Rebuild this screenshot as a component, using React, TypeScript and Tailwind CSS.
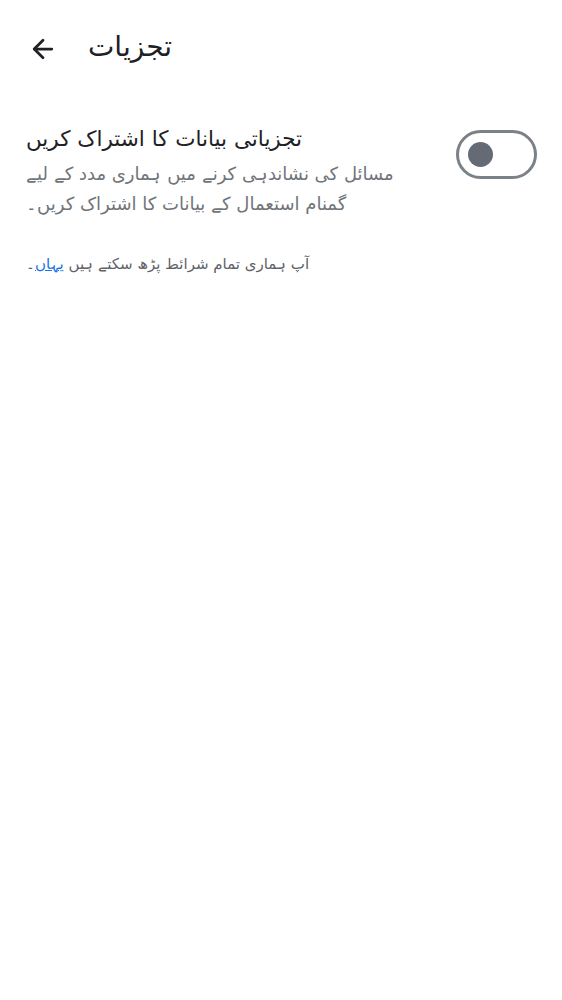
import { ArrowLeft } from "lucide-react";

const font = { fontFamily: '"DejaVu Sans", "Noto Sans", sans-serif' };

export default function App() {
  return (
    <div className="min-h-screen w-full bg-white" style={font}>
      {/* Top bar */}
      <header className="flex h-[98px] items-center px-[28px] pb-[4px]">
        <ArrowLeft className="mt-[4px] size-[30px] text-[#202124]" strokeWidth={2.2} />
        <h1 dir="rtl" className="ml-[30px] text-[28px] text-[#202124]">
          تجزیات
        </h1>
      </header>

      {/* Setting row */}
      <section className="flex items-start justify-between pl-[26px] pr-[25px] pt-[26px]">
        <div className="max-w-[390px]">
          <h2 dir="rtl" className="text-left text-[21.5px] leading-[30px] text-[#202124]">
            تجزیاتی بیانات کا اشتراک کریں
          </h2>
          <p dir="rtl" className="mt-[5px] text-left text-[18px] leading-[30px] text-[#70757a]">
            مسائل کی نشاندہی کرنے میں ہماری مدد کے لیے گمنام استعمال کے بیانات کا اشتراک کریں۔
          </p>
        </div>
        <button
          role="switch"
          aria-checked="false"
          className="mt-[6px] flex h-[49px] w-[81px] shrink-0 items-center rounded-full border-[3px] border-[#7b8189] bg-white pl-[9px]"
        >
          <span className="size-[25px] rounded-full bg-[#646b74]" />
        </button>
      </section>

      <p dir="rtl" className="mt-[30px] pl-[26px] text-left text-[15px] leading-[30px] text-[#5f6368]">
        آپ ہماری تمام شرائط پڑھ سکتے ہیں{" "}
        <a href="#" className="text-[#1a73e8] underline">
          یہاں
        </a>
        ۔
      </p>
    </div>
  );
}
